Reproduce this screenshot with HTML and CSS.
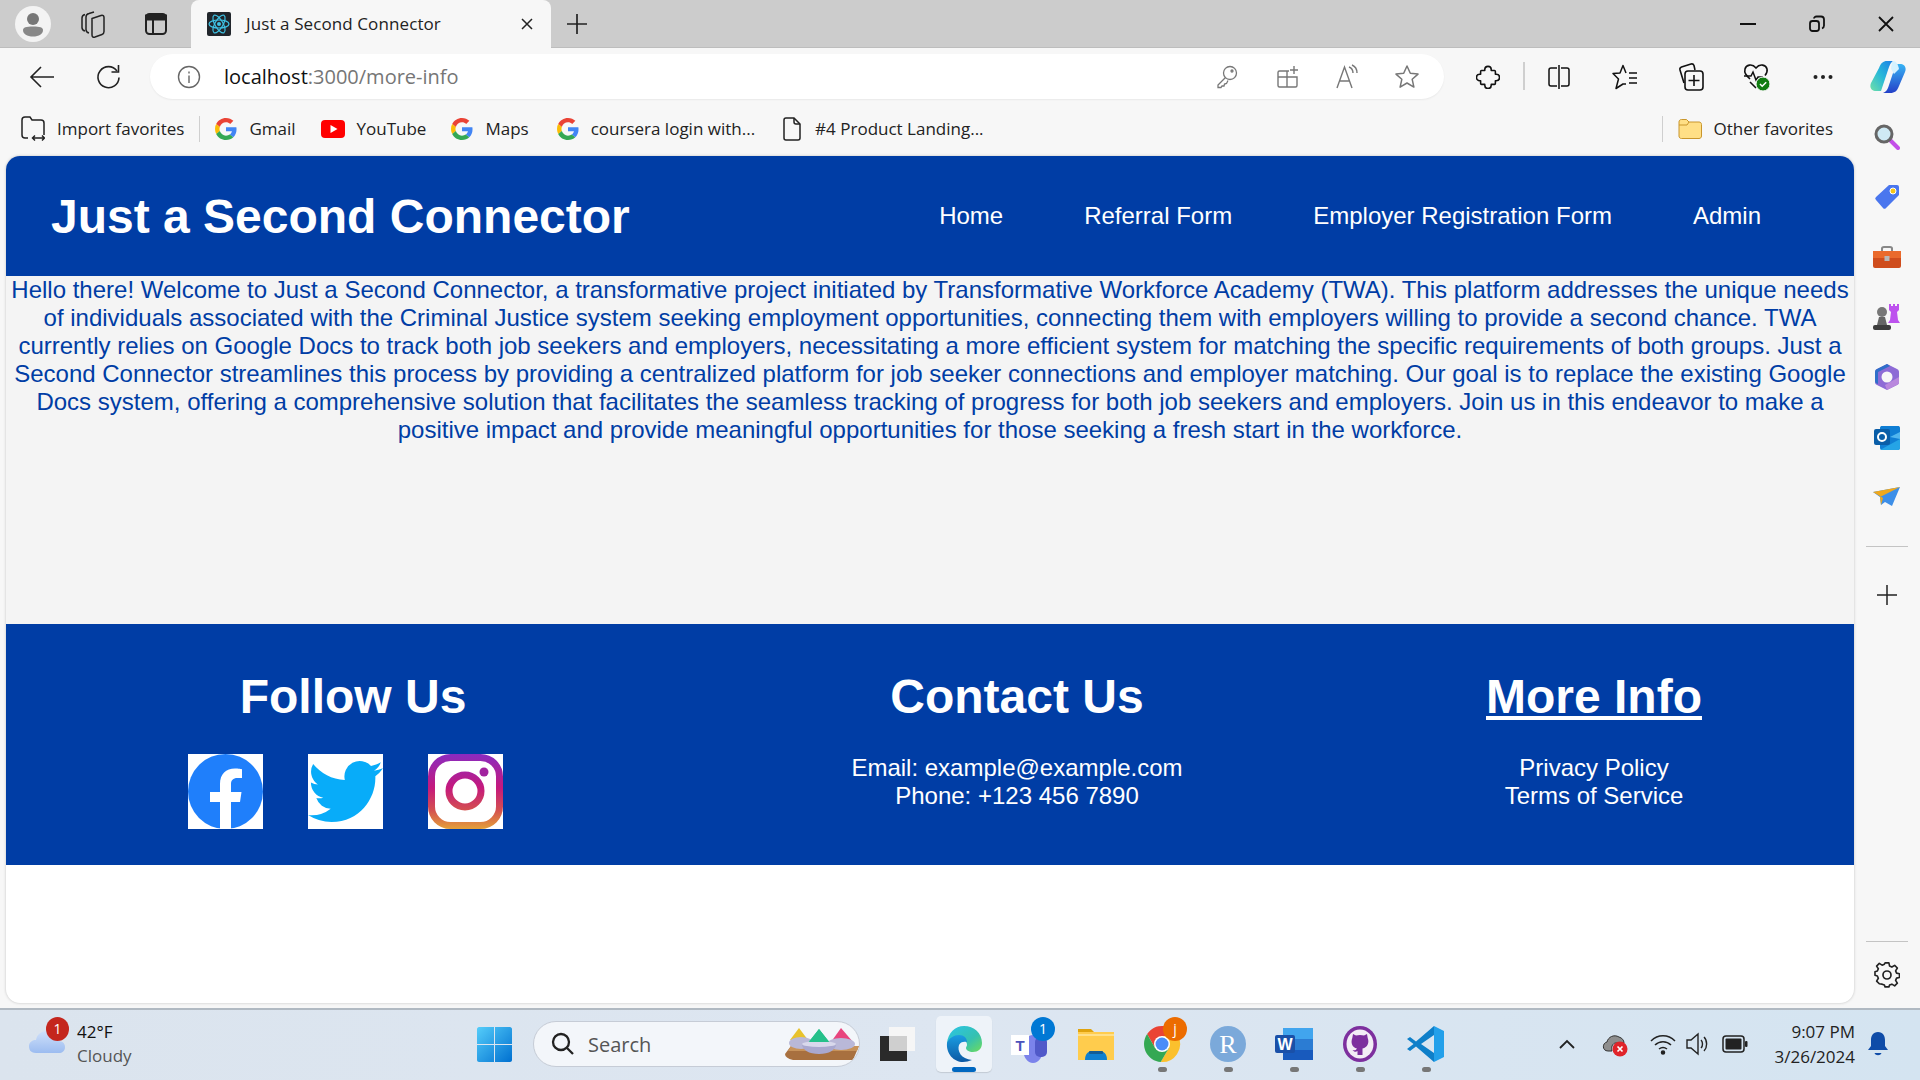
FILE: index.html
```html
<!DOCTYPE html>
<html lang="en">
<head>
<meta charset="utf-8">
<title>Just a Second Connector</title>
<link rel="stylesheet" href="styles.css">
</head>
<body>
<svg class="defs" width="0" height="0" aria-hidden="true">
  <defs>
    <symbol id="g" viewBox="0 0 48 48">
      <path fill="#EA4335" d="M24 9.5c3.54 0 6.71 1.22 9.21 3.6l6.85-6.85C35.9 2.38 30.47 0 24 0 14.62 0 6.51 5.38 2.56 13.22l7.98 6.19C12.43 13.72 17.74 9.5 24 9.5z"/>
      <path fill="#4285F4" d="M46.98 24.55c0-1.57-.15-3.09-.38-4.55H24v9.02h12.94c-.58 2.96-2.26 5.48-4.78 7.18l7.73 6c4.51-4.18 7.09-10.36 7.09-17.65z"/>
      <path fill="#FBBC05" d="M10.53 28.59c-.48-1.45-.76-2.99-.76-4.59s.27-3.14.76-4.59l-7.98-6.19C.92 16.46 0 20.12 0 24c0 3.88.92 7.54 2.56 10.78l7.97-6.19z"/>
      <path fill="#34A853" d="M24 48c6.48 0 11.93-2.13 15.89-5.81l-7.73-6c-2.15 1.45-4.92 2.3-8.16 2.3-6.26 0-11.57-4.22-13.47-9.91l-7.98 6.19C6.51 42.62 14.62 48 24 48z"/>
    </symbol>
    <linearGradient id="ig" x1="0" y1="0" x2="0" y2="75" gradientUnits="userSpaceOnUse">
      <stop offset="0" stop-color="#8a2bc0"/><stop offset=".45" stop-color="#c5197d"/><stop offset=".75" stop-color="#d4504f"/><stop offset="1" stop-color="#e4a03a"/>
    </linearGradient>
    <linearGradient id="edge1" x1="0" y1="0" x2="1" y2="1">
      <stop offset="0" stop-color="#2bc4e8"/><stop offset=".6" stop-color="#35c1b0"/><stop offset="1" stop-color="#6fdc5a"/>
    </linearGradient>
    <linearGradient id="edge2" x1="0" y1="0" x2="0" y2="1">
      <stop offset="0" stop-color="#1b9de2"/><stop offset="1" stop-color="#0c59a4"/>
    </linearGradient>
    <linearGradient id="cop1" x1="0" y1="1" x2="1" y2="0">
      <stop offset="0" stop-color="#6fe0a8"/><stop offset=".5" stop-color="#28b8d8"/><stop offset="1" stop-color="#1c7fe8"/>
    </linearGradient>
    <linearGradient id="cop2" x1="0" y1="0" x2="0" y2="1">
      <stop offset="0" stop-color="#38b4f4"/><stop offset="1" stop-color="#2440c8"/>
    </linearGradient>
    <linearGradient id="win" x1="0" y1="0" x2="1" y2="1">
      <stop offset="0" stop-color="#55cdfa"/><stop offset="1" stop-color="#0070d0"/>
    </linearGradient>
    <linearGradient id="cloud" x1="0" y1="0" x2="0" y2="1">
      <stop offset="0" stop-color="#cfe0fa"/><stop offset="1" stop-color="#9cbcf0"/>
    </linearGradient>
  </defs>
</svg>

<div class="window">
  <header class="titlebar">
    <div class="tb-btn w60 ml3">
      <svg width="36" height="36" viewBox="0 0 36 36"><circle cx="18" cy="18" r="18" fill="#f3f3f3"/><circle cx="18" cy="13" r="6" fill="#777"/><path d="M8 24c0-2.500 3-3.500 10-3.500s10 1 10 3.500c0 4-4 6.500-10 6.500S8 28 8 24z" fill="#888"/></svg>
    </div>
    <div class="tb-btn w60">
      <svg width="26" height="28" viewBox="0 0 26 28" fill="none" stroke="#222" stroke-width="1.500"><path d="M5 21c-2-.5-3-2-3-3.500V8c0-2 1-3 3-3.500"/><path d="M9 23c-2-.5-3-2-3-3.500V7c0-2 1-3 3-3.500l5-1.500"/><path d="M12 8.500l9-3c2-.6 3 .5 3 2v14c0 1.500-.5 2.500-2 3l-7 2.500c-2 .6-3-.5-3-2z"/></svg>
    </div>
    <div class="tb-btn w66">
      <svg width="24" height="24" viewBox="0 0 24 24" fill="none" stroke="#222" stroke-width="2"><rect x="2" y="2" width="20" height="20" rx="3.500"/><path d="M2 3.500h20v4H2z" fill="#222"/><path d="M9 7v15"/></svg>
    </div>
    <div class="tab">
      <svg class="tab-ico" width="24" height="24" viewBox="0 0 24 24"><rect width="24" height="24" rx="2" fill="#21262c"/><g fill="none" stroke="#3fc4e6" stroke-width="1.200"><ellipse cx="12" cy="12" rx="10" ry="4"/><ellipse cx="12" cy="12" rx="10" ry="4" transform="rotate(60 12 12)"/><ellipse cx="12" cy="12" rx="10" ry="4" transform="rotate(120 12 12)"/></g><circle cx="12" cy="12" r="2" fill="#3fc4e6"/></svg>
      <span class="tab-title">Just a Second Connector</span>
      <svg class="tab-close" width="12" height="12" viewBox="0 0 12 12" stroke="#222" stroke-width="1.500"><path d="M1 1l10 10M11 1L1 11"/></svg>
    </div>
    <div class="tb-btn w52">
      <svg width="22" height="22" viewBox="0 0 22 22" stroke="#222" stroke-width="1.700"><path d="M11 1v20M1 11h20"/></svg>
    </div>
    <div class="win-controls">
      <div class="win-btn"><svg width="16" height="16" viewBox="0 0 16 16" stroke="#111" stroke-width="2"><path d="M0 8h16"/></svg></div>
      <div class="win-btn"><svg width="16" height="18" viewBox="0 0 16 18" fill="none" stroke="#111" stroke-width="1.800"><rect x="1" y="6" width="9" height="10" rx="2.500"/><path d="M5 3.500c0-1 1-2 2.500-2H12c1.500 0 3 1 3 3v6c0 1.500-.6 2.500-2 3"/></svg></div>
      <div class="win-btn"><svg width="16" height="16" viewBox="0 0 16 16" stroke="#111" stroke-width="1.800"><path d="M1 1l14 14M15 1L1 15"/></svg></div>
    </div>
  </header>

  <div class="toolbar">
    <div class="tool">
      <svg width="26" height="24" viewBox="0 0 26 24" fill="none" stroke="#222" stroke-width="1.600"><path d="M25 12H2M12 2L2 12l10 10"/></svg>
    </div>
    <div class="tool">
      <svg width="26" height="28" viewBox="0 0 26 28" fill="none" stroke="#222" stroke-width="1.600"><path d="M22 8a10.500 10.500 0 1 0 2 6.500"/><path d="M23.500 2v7h-7"/></svg>
    </div>
    <div class="omnibox">
      <svg class="info" width="24" height="24" viewBox="0 0 24 24" fill="none" stroke="#666" stroke-width="1.400"><circle cx="12" cy="12" r="10.500"/><path d="M12 10.500V18M12 6.500V8.500"/></svg>
      <span class="url"><span class="url-host">localhost</span>:3000/more-info</span>
      <div class="omni-tools">
        <div class="omni-tool"><svg width="22" height="24" viewBox="0 0 22 24" fill="none" stroke="#777" stroke-width="1.300"><circle cx="14" cy="8" r="6.500"/><circle cx="16" cy="6" r="1"/><path d="M9.500 12.500L2 20v2.500h3l1-1.500h2l.5-2 2-.5 1.500-3"/></svg></div>
        <div class="omni-tool"><svg width="24" height="24" viewBox="-1 0 24 24" fill="none" stroke="#777" stroke-width="1.400"><path d="M13 6H3.500C2.500 6 2 6.500 2 7.500v13C2 21.500 2.500 22 3.500 22h16c1 0 1.500-.5 1.500-1.500V12H2M11 6v16"/><path d="M18 1v8M14 5h8"/></svg></div>
        <div class="omni-tool"><svg width="26" height="26" viewBox="-2 0 26 26" fill="none" stroke="#777" stroke-width="1.400"><path d="M1 24L8.500 3 16 24M3.500 17h10"/><path d="M13 3c2.500 1 4 3.500 4 6M16 1c3 1.300 5 4 5 8"/></svg></div>
        <div class="omni-tool"><svg width="26" height="26" viewBox="0 0 26 26" fill="none" stroke="#777" stroke-width="1.500"><path d="M13 2l3.300 7.300 7.700.8-5.800 5.200 1.700 7.800L13 19l-6.900 4.100 1.700-7.800L2 10.100l7.700-.8z" stroke-linejoin="round"/></svg></div>
      </div>
    </div>
    <div class="tool ml11">
      <svg width="24" height="24" viewBox="0 0 26 26" fill="none" stroke="#111" stroke-width="1.700"><path d="M9.500 6V5a3.500 3.500 0 0 1 7 0v1H20a1 1 0 0 1 1 1v3h1a3.500 3.500 0 0 1 0 7h-1v3a1 1 0 0 1-1 1h-3.500v1a3.500 3.500 0 0 1-7 0v-1H6a1 1 0 0 1-1-1v-3H4a3.500 3.500 0 0 1 0-7h1V7a1 1 0 0 1 1-1z" stroke-linejoin="round"/></svg>
    </div>
    <div class="tool-sep"></div>
    <div class="tool">
      <svg width="24" height="26" viewBox="0 0 24 26" fill="none" stroke="#111" stroke-width="1.500"><path d="M10 4H4C2.500 4 2 5 2 6v14c0 1 .5 2 2 2h6M14 4h6c1.500 0 2 1 2 2v14c0 1-.5 2-2 2h-6M12 1v24"/></svg>
    </div>
    <div class="tool">
      <svg width="26" height="26" viewBox="0 0 26 26" fill="none" stroke="#111" stroke-width="1.500"><path d="M14 9L11 1.500 8 9l-7 .5L6.500 15 4 24.500l7-4.500h3" stroke-linejoin="round"/><path d="M17 9h8M17 14h8M17 19h8"/></svg>
    </div>
    <div class="tool">
      <svg width="26" height="30" viewBox="0 0 26 30" fill="none" stroke="#111" stroke-width="1.600"><path d="M6 21L2 8c-.4-1.500.2-2.500 1.500-3L13 2c1.500-.4 2.500.2 3 1.500L17 8"/><rect x="7" y="9" width="18" height="19" rx="3" fill="#f7f7f7"/><path d="M16 13v11M10.500 18.500h11"/></svg>
    </div>
    <div class="tool">
      <svg width="28" height="30" viewBox="0 0 28 30"><path d="M7 17C3 13 1 11 2 7c1-4 7-6 11-1 4-5 10-3 11 1 .6 2.500-.3 4.500-2 6.500" fill="none" stroke="#111" stroke-width="1.600"/><path d="M1 14h7l2-4 3 8 2-3h5" fill="none" stroke="#111" stroke-width="1.500"/><path d="M7 20l6 6" stroke="#111" stroke-width="1.600"/><circle cx="20" cy="22" r="7" fill="#107c10" stroke="#f7f7f7"/><path d="M17 22l2.200 2.200 4-4" fill="none" stroke="#fff" stroke-width="1.500"/></svg>
    </div>
    <div class="tool">
      <svg width="20" height="6" viewBox="0 0 20 6" fill="#222"><circle cx="2.500" cy="3" r="2"/><circle cx="10" cy="3" r="2"/><circle cx="17.500" cy="3" r="2"/></svg>
    </div>
    <div class="tool w64">
      <svg width="36" height="32" viewBox="0 0 36 32"><path d="M23 0h-6c-4 0-6 2-8 7L1 22c-2 5 1 8 5 8h5l7-21c1.500-5 3-8 5-9z" fill="url(#cop1)"/><path d="M13 32h7c5 0 7-2 9-7l6-14c2-5-1-8-5-8h-4l-7 21c-1.500 5-3 7-6 8z" fill="url(#cop2)"/><path d="M23 0c3 0 5 3 6 8l-5 5-3-5c.3-4 1-7 2-8z" fill="#d5f2ff"/></svg>
    </div>
  </div>

  <div class="workspace">
    <div class="viewport">
      <nav class="bookmarks">
        <div class="bm bm-import">
          <svg width="24" height="26" viewBox="0 0 24 26" fill="none" stroke="#222" stroke-width="1.500"><path d="M7 22H4c-1.500 0-3-1-3-3V4c0-1.500 1-3 3-3h5l2 3h9c1.500 0 3 1 3 3v12"/><path d="M12 22h11M14 19.500L11.500 22l2.500 2.500M21 19.500l2.500 2.500-2.500 2.500"/></svg>
          <span>Import favorites</span>
        </div>
        <div class="bm-sep"></div>
        <div class="bm"><svg width="22" height="22"><use href="#g"/></svg><span>Gmail</span></div>
        <div class="bm"><svg width="24" height="18" viewBox="0 0 24 18"><rect width="24" height="18" rx="4" fill="#f00"/><path d="M9.500 5v8l7-4z" fill="#fff"/></svg><span>YouTube</span></div>
        <div class="bm"><svg width="22" height="22"><use href="#g"/></svg><span>Maps</span></div>
        <div class="bm bm-shift"><svg width="22" height="22"><use href="#g"/></svg><span>coursera login with...</span></div>
        <div class="bm bm-shift bm-doc"><svg width="18" height="24" viewBox="0 0 18 24" fill="none" stroke="#222" stroke-width="1.500"><path d="M3 1h8l6 6v14c0 1.500-1 2-2 2H3c-1 0-2-.5-2-2V3c0-1.500 1-2 2-2z"/><path d="M11 1v4c0 1.500.5 2 2 2h4"/></svg><span>#4 Product Landing...</span></div>
        <div class="bm-sep bm-sep-right"></div>
        <div class="bm"><svg width="24" height="20" viewBox="0 0 24 20"><path d="M1 3c0-1.500 1-2.500 2.500-2.500h5L11 3h10c1.500 0 2.500 1 2.500 2.500V17c0 1.500-1 2.500-2.500 2.500H3.500C2 19.500 1 18.500 1 17z" fill="#ffdf86" stroke="#c9962c"/><path d="M1 6h8l2-3" fill="none" stroke="#c9962c"/></svg><span>Other favorites</span></div>
      </nav>

      <main class="page">
        <header class="site-header">
          <h1 class="site-title">Just a Second Connector</h1>
          <ul class="site-nav">
            <li>Home</li>
            <li>Referral Form</li>
            <li>Employer Registration Form</li>
            <li>Admin</li>
          </ul>
        </header>
        <section class="site-content">
          <p>Hello there! Welcome to Just a Second Connector, a transformative project initiated by Transformative Workforce Academy (TWA). This platform addresses the unique needs of individuals associated with the Criminal Justice system seeking employment opportunities, connecting them with employers willing to provide a second chance. TWA currently relies on Google Docs to track both job seekers and employers, necessitating a more efficient system for matching the specific requirements of both groups. Just a Second Connector streamlines this process by providing a centralized platform for job seeker connections and employer matching. Our goal is to replace the existing Google Docs system, offering a comprehensive solution that facilitates the seamless tracking of progress for both job seekers and employers. Join us in this endeavor to make a positive impact and provide meaningful opportunities for those seeking a fresh start in the workforce.</p>
        </section>
        <footer class="site-footer">
          <div class="foot-col">
            <h2>Follow Us</h2>
            <div class="socials">
              <svg width="75" height="75" viewBox="0 0 75 75"><rect width="75" height="75" fill="#fff"/><circle cx="37.500" cy="37.500" r="37.500" fill="#1f7ffb"/><path d="M32 75V48H22V38H32V30C32 20 38 14.500 47 14.500C50 14.500 54 15.200 54 15.200V24H49.500C45 24 43 26.500 43 30V38H53.500L52 48H43V75Z" fill="#fff"/></svg>
              <svg width="75" height="75" viewBox="0 0 75 75"><rect width="75" height="75" fill="#fff"/><path transform="scale(3.125)" fill="#08acf9" d="M23.953 4.570a10 10 0 01-2.825.775 4.958 4.958 0 002.163-2.723c-.951.555-2.005.959-3.127 1.184a4.920 4.920 0 00-8.384 4.482C7.690 8.095 4.067 6.130 1.640 3.162a4.822 4.822 0 00-.666 2.475c0 1.710.870 3.213 2.188 4.096a4.904 4.904 0 01-2.228-.616v.060a4.923 4.923 0 003.946 4.827 4.996 4.996 0 01-2.212.085 4.936 4.936 0 004.604 3.417 9.867 9.867 0 01-6.102 2.105c-.390 0-.779-.023-1.170-.067a13.995 13.995 0 007.557 2.209c9.053 0 13.998-7.496 13.998-13.985 0-.210 0-.420-.015-.630A9.935 9.935 0 0024 4.590z"/></svg>
              <svg width="75" height="75" viewBox="0 0 75 75"><rect width="75" height="75" fill="#fff"/><rect x="3.500" y="3.500" width="68" height="68" rx="19" fill="none" stroke="url(#ig)" stroke-width="7"/><circle cx="37" cy="37" r="16" fill="none" stroke="url(#ig)" stroke-width="7"/><circle cx="56" cy="18" r="4.500" fill="#a1239f"/></svg>
            </div>
          </div>
          <div class="foot-col">
            <h2>Contact Us</h2>
            <p>Email: example@example.com</p>
            <p>Phone: +123 456 7890</p>
          </div>
          <div class="foot-col">
            <h2 class="underlined">More Info</h2>
            <p>Privacy Policy</p>
            <p>Terms of Service</p>
          </div>
        </footer>
      </main>
    </div>

    <aside class="sidebar">
      <div class="side-item"><svg width="26" height="26" viewBox="0 0 26 26"><path d="M16 16l8 8" stroke="#c34ee8" stroke-width="4" stroke-linecap="round"/><circle cx="10" cy="10" r="8" fill="#cfeaf5" stroke="#666" stroke-width="3"/></svg></div>
      <div class="side-item"><svg width="26" height="26" viewBox="0 0 26 26"><path d="M15 1H23a2 2 0 0 1 2 2V11L12 24a2 2 0 0 1-3 0L2 16a2 2 0 0 1 0-3Z" fill="#4a76ee"/><circle cx="19" cy="7" r="3" fill="#f5c518" stroke="#fff"/></svg></div>
      <div class="side-item"><svg width="28" height="22" viewBox="0 0 28 22"><path d="M9 5V2.500c0-1 1-1.500 2-1.500h6c1 0 2 .5 2 1.500V5" fill="none" stroke="#888" stroke-width="2"/><rect y="5" width="28" height="17" rx="2" fill="#cf4d1d"/><rect y="5" width="28" height="7" fill="#ea6a2c"/><rect x="11.500" y="10" width="5" height="5" fill="#b8b8b8"/></svg></div>
      <div class="side-item"><svg width="28" height="28" viewBox="0 0 28 28"><path d="M16 1h2v2h2V1h2v2h2V1h2v6l-2 2 1 8 2 3H15l2-3 1-8-2-2z" fill="#bd52ee"/><circle cx="9" cy="9" r="5" fill="#777"/><path d="M6 14h6l2 8H4z" fill="#666"/><rect x="0" y="22" width="18" height="5" rx="2" fill="#3d3d3d"/></svg></div>
      <div class="side-item"><svg width="26" height="28" viewBox="0 0 26 28"><path d="M13 1l10 5c2 1 2 2 2 4v8c0 2 0 3-2 4l-10 5-10-5c-2-1-2-2-2-4v-8c0-2 0-3 2-4z" fill="#8d6bd6"/><path d="M1 18V10c0-2 0-3 2-4l10-5 3 2-12 6v12c-2-.5-3-1.500-3-3z" fill="#2f6fc9"/><path d="M13 27l10-5c2-1 2-2 2-4v-4l-14 8z" fill="#b988dd"/><circle cx="13" cy="14" r="5.500" fill="#f7f7f7"/></svg></div>
      <div class="side-item"><svg width="26" height="26" viewBox="0 0 26 26"><path d="M8 2h16c1 0 2 .5 2 2v20c0 1-1 2-2 2H8c-1 0-2-1-2-2V4c0-1.500 1-2 2-2z" fill="#0f7ed4"/><path d="M16 13l10-5v7z" fill="#50b6ef"/><path d="M6 26l20-11v9c0 1-1 2-2 2z" fill="#25a4e6"/><rect y="5" width="16" height="16" rx="2" fill="#0a5ea8"/><circle cx="8" cy="13" r="4" fill="none" stroke="#fff" stroke-width="2"/></svg></div>
      <div class="side-item"><svg width="28" height="20" viewBox="0 0 28 20"><path d="M0 5l27-5-8 19-7-4-4 3-1-8z" fill="#3d8fe8"/><path d="M0 5l27-5L7 10l1 8 2-7z" fill="#f0a81c"/></svg></div>
      <div class="side-divider"></div>
      <div class="side-item short"><svg width="20" height="20" viewBox="0 0 20 20" stroke="#222" stroke-width="1.500"><path d="M10 0v20M0 10h20"/></svg></div>
      <div class="side-spacer"></div>
      <div class="side-divider tight"></div>
      <div class="side-item gear"><svg width="26" height="26" viewBox="0 0 26 26" fill="none" stroke="#222" stroke-width="1.700"><path d="M11 1.500h4l.7 3.300 2.400 1 2.900-1.800 2.800 2.800-1.800 2.900 1 2.400 3 .7v3.800l-3 .7-1 2.400 1.800 2.900-2.800 2.800-2.900-1.800-2.400 1-.7 1.800h-4l-.7-1.800-2.400-1L5 23.200l-2.800-2.800L4 17.500l-1-2.400-2.500-.7v-3.800l2.500-.7 1-2.400L2.200 4.800 5 2l2.900 1.800 2.400-1z" transform="translate(.5 -.5) scale(.96)" stroke-linejoin="round"/><circle cx="13" cy="13" r="4"/></svg></div>
    </aside>
  </div>

  <footer class="taskbar">
    <div class="weather">
      <svg class="weather-ico" width="36" height="24" viewBox="0 0 36 24"><path d="M7 24C1 24 0 20 0 17 0 13 4 10.500 7 11 8 5 13 2 18 2 24 2 29 6 29 12 33 12 36 14 36 18 36 22 33 24 30 24Z" fill="url(#cloud)"/></svg>
      <span class="weather-badge">1</span>
      <div class="weather-text"><span class="temp">42°F</span><span class="cond">Cloudy</span></div>
    </div>
    <svg class="start" width="35" height="35" viewBox="0 0 35 35"><path d="M0 2c0-1 1-2 2-2h15v17H0zM18 0h15c1 0 2 1 2 2v15H18zM0 18h17v17H2c-1 0-2-1-2-2zM18 18h17v15c0 1-1 2-2 2H18z" fill="url(#win)"/></svg>
    <div class="search">
      <svg width="24" height="24" viewBox="0 0 24 24" fill="none" stroke="#222" stroke-width="2.300"><circle cx="10" cy="10" r="8"/><path d="M16 16l6 6"/></svg>
      <span>Search</span>
      <svg class="bowls" width="74" height="32" viewBox="0 0 74 32"><path d="M6 18H74L68 32H8Q0 30 0 26Z" fill="#a8703f"/><path d="M6 18H74L72 23H3Z" fill="#c8935a"/><path d="M14 0L5 12H23Z" fill="#e8c22c"/><ellipse cx="16" cy="15" rx="12" ry="6" fill="#b9b8d8"/><path d="M56 0L46 14H68Z" fill="#e8457e"/><ellipse cx="56" cy="16" rx="14" ry="6" fill="#b9b8d8"/><path d="M34 1L22 16H46Z" fill="#25c08a"/><path d="M17 16H51C51 22 44 26 34 26S17 22 17 16Z" fill="#a9a8cf"/><ellipse cx="34" cy="16" rx="17" ry="3" fill="#d8d8ec"/><path d="M34 1L24 14H44Z" fill="#25c08a"/></svg>
    </div>
    <div class="tk tk-view"><svg width="35" height="34" viewBox="0 0 35 34"><rect y="9" width="27" height="25" fill="#2a2a2a"/><rect x="9" width="26" height="24" fill="#f6f6f6"/><rect x="9" y="9" width="18" height="15" fill="#cfcfcf"/></svg></div>
    <div class="tk tk-active"><svg width="36" height="36" viewBox="0 0 36 36"><path d="M1 17C2 7 9 0 18 0c10 0 18 7 18 17 0 6-4 9-9 9-4 0-7-2-7-4 0-1 1-2 1-3 0-4-3-6-8-6-5 0-10 3-12 7z" fill="url(#edge1)"/><path d="M1 17c2-5 7-8 12-8 5 0 8 3 8 7-3-1-7 0-8 3-2 6 2 14 13 15-3 1-6 2-9 2C8 36 0 28 1 17z" fill="url(#edge2)"/></svg></div>
    <div class="tk tk-first">
      <svg width="38" height="38" viewBox="0 0 38 38"><ellipse cx="22" cy="24" rx="10" ry="14" fill="#7b83eb"/><rect x="24" y="12" width="12" height="20" rx="5" fill="#5059c9"/><rect x="0" y="10" width="18" height="20" fill="#fff"/><text class="teams-t" x="9" y="26" text-anchor="middle">T</text></svg>
      <span class="tk-badge blue">1</span>
    </div>
    <div class="tk"><svg width="36" height="36" viewBox="0 0 36 36"><path d="M0 3h13l3 3h-16z" fill="#e0a30e"/><rect y="6" width="36" height="28" fill="#ffcc4d"/><rect y="8" width="36" height="2" fill="#ffe08a"/><path d="M7 34c0-6 3-9 8-9h6c5 0 8 3 8 9z" fill="#0f80d0"/><rect x="11" y="25" width="14" height="3" rx="1" fill="#135d95"/></svg></div>
    <div class="tk run">
      <svg width="38" height="38" viewBox="0 0 38 38"><path d="M35.200 11.100A18 18 0 0 0 4.100 9L12.100 23 19 11Z" fill="#ea4335"/><path d="M35.200 11.100A18 18 0 0 1 17.700 37L25.900 23 19 11Z" fill="#fbc02d"/><path d="M17.700 37A18 18 0 0 1 4.100 9L12.100 23H25.900Z" fill="#34a853"/><circle cx="19" cy="19" r="8" fill="#fff"/><circle cx="19" cy="19" r="6.500" fill="#4b8df8"/></svg>
      <span class="tk-badge orange">j</span>
    </div>
    <div class="tk run"><svg width="36" height="36" viewBox="0 0 36 36"><circle cx="18" cy="18" r="18" fill="#7ba9da"/><text class="r-letter" x="18" y="27" text-anchor="middle">R</text></svg></div>
    <div class="tk run"><svg width="38" height="32" viewBox="0 0 38 32"><rect x="8" width="30" height="11" fill="#41a5ee"/><rect x="8" y="11" width="30" height="11" fill="#2b7cd3"/><rect x="8" y="22" width="30" height="10" fill="#185abd"/><rect y="7" width="20" height="18" rx="2" fill="#1a50a8"/><text class="word-w" x="10" y="22" text-anchor="middle">W</text></svg></div>
    <div class="tk run"><svg width="34" height="36" viewBox="0 0 34 36"><ellipse cx="17" cy="18" rx="17" ry="18" fill="#7d2f9e"/><ellipse cx="17" cy="18" rx="13.500" ry="14.500" fill="#f3edf6"/><path d="M10 8l3 1.500c2.500-.7 5.500-.7 8 0L24 8l.7 4c1.800 4.500 0 9.500-5.200 10.500V29h-5v-4c-1.500 1.200-3.500 1-5-1 1.800.8 3.500.3 4.500-1.500C9 21.500 7.500 16.500 9.300 12z" fill="#7d2f9e"/></svg></div>
    <div class="tk run"><svg width="38" height="36" viewBox="0 0 38 36"><path d="M27 0V9L14 18 27 27V36L9 20.500 3 25 0 23 6.500 18 0 13 3 11 9 15.500Z" fill="#0e7fc9"/><path d="M27 0L37 5V31L27 36Z" fill="#23a0ea"/></svg></div>
    <div class="tray tray-chev"><svg width="16" height="10" viewBox="0 0 16 10" fill="none" stroke="#222" stroke-width="1.800"><path d="M1 9l7-7 7 7"/></svg></div>
    <div class="tray tray-cloud"><svg width="26" height="26" viewBox="0 0 26 26"><path d="M6 20c-6 0-6-8-1-9 1-5 7-8 12-5 3 1 5 3 5 6H14c-4 0-5 5-4 8z" fill="#8e8e8e" stroke="#333"/><circle cx="18" cy="18" r="7.500" fill="#e0242a"/><path d="M15.500 15.500l5 5M20.500 15.500l-5 5" stroke="#fff" stroke-width="1.700"/></svg></div>
    <div class="tray tray-wifi"><svg width="26" height="22" viewBox="0 0 26 22" fill="none" stroke="#222" stroke-width="1.500"><path d="M1 8c7-7 17-7 24 0M5 12c4.500-4.500 11.500-4.500 16 0M9 16c2.500-2 5.500-2 8 0"/><circle cx="13" cy="19.500" r="1.500" fill="#222"/></svg></div>
    <div class="tray tray-vol"><svg width="24" height="24" viewBox="0 0 24 24" fill="none" stroke="#222" stroke-width="1.400"><path d="M1 8h4l7-6v20l-7-6H1z"/><path d="M15 8c2 2 2 6 0 8M18 5c3.500 3.500 3.500 10.500 0 14"/></svg></div>
    <div class="tray tray-bat"><svg width="26" height="18" viewBox="0 0 26 18"><rect x="1" y="1" width="21" height="16" rx="3" fill="none" stroke="#222" stroke-width="1.500"/><rect x="3.500" y="3.500" width="16" height="11" rx="1" fill="#222"/><rect x="23" y="6" width="2.500" height="6" rx="1" fill="#222"/></svg></div>
    <div class="clock"><span>9:07 PM</span><span>3/26/2024</span></div>
    <div class="tray tray-bell"><svg width="22" height="26" viewBox="0 0 22 26"><path d="M11 1c5 0 7 4 7 8v6l3 4H1l3-4V9c0-4 2-8 7-8z" fill="#0f4ca8"/><path d="M7.500 22h7c-1 3-6 3-7 0z" fill="#0f4ca8"/></svg></div>
  </footer>
</div>
</body>
</html>
```
FILE: styles.css
```css
* { box-sizing: border-box; }
html, body { margin: 0; padding: 0; }
body { width: 1920px; height: 1080px; overflow: hidden; font-family: "Open Sans", "Noto Sans", sans-serif; color: #111; background: #f7f7f7; }
.defs { position: absolute; }
svg { display: block; flex: none; }

.window { display: flex; flex-direction: column; width: 1920px; height: 1080px; }

/* title bar */
.titlebar { display: flex; align-items: center; height: 48px; background: #cccccc; border-bottom: 1px solid #bdbdbd; flex: none; }
.tb-btn { display: flex; align-items: center; justify-content: center; height: 47px; }
.w60 { width: 60px; }
.w66 { width: 66px; }
.w52 { width: 52px; }
.w64 { width: 64px; }
.ml3 { margin-left: 3px; }
.ml11 { margin-left: 11px; }
.tab { display: flex; align-items: center; width: 360px; height: 48px; margin-left: 2px; padding-left: 16px; background: #f7f7f7; border-radius: 8px 8px 0 0; }
.tab-title { margin-left: 15px; font-size: 17px; letter-spacing: .1px; color: #222; white-space: nowrap; }
.tab-close { margin-left: auto; margin-right: 18px; }
.win-controls { display: flex; margin-left: auto; }
.win-btn { display: flex; align-items: center; justify-content: center; width: 69px; height: 47px; }

/* toolbar */
.toolbar { display: flex; align-items: flex-start; height: 59px; padding: 6px 0 0 9px; flex: none; background: #f7f7f7; }
.tool { display: flex; align-items: center; justify-content: center; width: 66px; height: 45px; flex: none; }
.tool.w64 { width: 64px; }
.tool-sep { width: 2px; height: 28px; margin: 8px 1px 0 2px; background: #cfcfcf; }
.omnibox { display: flex; align-items: center; width: 1295px; height: 45px; margin-left: 9px; padding-left: 27px; padding-right: 7px; background: #fff; border-radius: 23px; box-shadow: 0 1px 2px rgba(0,0,0,.06); }
.url { margin-left: 23px; font-size: 20px; color: #767676; white-space: nowrap; }
.url-host { color: #111; }
.omni-tools { display: flex; margin-left: auto; }
.omni-tool { display: flex; align-items: center; justify-content: center; width: 60px; height: 45px; }

/* workspace */
.workspace { display: flex; flex: 1; min-height: 0; }
.viewport { display: flex; flex-direction: column; width: 1854px; flex: none; padding-bottom: 5px; }
.bookmarks { display: flex; align-items: center; height: 49px; padding: 0 21px 6px 21px; font-size: 17px; color: #222; flex: none; }
.bm { display: flex; align-items: center; gap: 12px; margin-right: 25px; white-space: nowrap; }
.bm-import { margin-right: 0; }
.bm-shift { margin-left: 3px; }
.bm-doc { gap: 14px; }
.bm-sep { width: 1px; height: 26px; margin: 0 15px; background: #cfcfcf; flex: none; }
.bm-sep-right { margin-left: auto; }
.bm:last-child { margin-right: 0; }

.page { display: flex; flex-direction: column; flex: 1; width: 1848px; margin-left: 6px; background: #fff; border-radius: 14px; overflow: hidden; box-shadow: 0 0 3px rgba(0,0,0,.22); font-family: "Liberation Sans", Arial, sans-serif; }
.site-header { display: flex; align-items: center; height: 120px; padding-left: 45px; background: #003da5; color: #fff; flex: none; }
.site-title { margin: 0; font-size: 48px; font-weight: 700; white-space: nowrap; }
.site-nav { display: flex; gap: 81px; list-style: none; margin: 0 93px 0 auto; padding: 0; font-size: 24px; }
.site-content { height: 348px; background: #f4f4f4; color: #003da5; font-size: 24px; text-align: center; flex: none; }
.site-content p { margin: 0; }
.site-footer { display: grid; grid-template-columns: 694px 634px 520px; padding: 45px 0 36px; background: #003da5; color: #fff; text-align: center; font-size: 24px; flex: none; }
.foot-col { display: flex; flex-direction: column; align-items: center; }
.foot-col h2 { margin: 0 0 30px; font-size: 48px; font-weight: 700; }
.foot-col h2.underlined { text-decoration: underline; }
.foot-col p { margin: 0; }
.socials { display: flex; gap: 45px; padding-right: 15px; }

/* side bar */
.sidebar { display: flex; flex-direction: column; align-items: center; flex: 1; }
.side-item { display: flex; align-items: center; justify-content: center; width: 60px; height: 60px; flex: none; }
.side-item.short { height: 58px; margin-top: 19px; }
.side-item.gear { height: 66px; }
.side-divider { width: 42px; height: 1px; margin-top: 19px; background: #c4c4c4; flex: none; }
.side-divider.tight { margin-top: 0; }
.side-spacer { flex: 1; }

/* task bar */
.taskbar { display: flex; align-items: center; height: 72px; padding-bottom: 2px; background: linear-gradient(90deg, #dbe4ee, #dde6f1 50%, #d4e4f1); border-top: 2px solid #b0b9c2; flex: none; }
.weather { position: relative; display: flex; align-items: center; width: 477px; padding-left: 29px; }
.weather-ico { margin-top: -6px; }
.weather-badge { position: absolute; left: 46px; top: -3px; width: 23px; height: 24px; border-radius: 50%; background: #c4261d; color: #fff; font-size: 14px; line-height: 24px; text-align: center; }
.weather-text { display: flex; flex-direction: column; margin-left: 12px; font-size: 17px; line-height: 24px; }
.temp { color: #111; }
.cond { color: #555; }
.start { margin-top: 1px; }
.search { display: flex; align-items: center; width: 327px; height: 46px; margin-left: 21px; padding-left: 17px; border-radius: 23px; background: #f3f6fa; border: 1px solid #c6ccd6; font-size: 20px; color: #555; overflow: hidden; }
.search span { margin-left: 13px; }
.bowls { margin-left: auto; }
.tk { position: relative; display: flex; align-items: center; justify-content: center; width: 66px; height: 56px; flex: none; }
.tk-view { width: 72px; margin-left: 1px; }
.tk-active { width: 56px; margin-left: 3px; margin-right: 5px; background: #eef3f9; border-radius: 5px; box-shadow: 0 1px 1px rgba(0,0,0,.12); }
.tk-active::after { content: ""; position: absolute; left: 16px; bottom: 0; width: 24px; height: 5px; border-radius: 3px; background: #0067c0; }
.run::after { content: ""; position: absolute; left: 29px; bottom: 0; width: 9px; height: 5px; border-radius: 3px; background: #777; }
.tk-badge { position: absolute; top: 1px; right: 8px; width: 24px; height: 24px; border-radius: 50%; color: #fff; font-size: 14px; line-height: 24px; text-align: center; }
.blue { background: #0078d4; }
.orange { background: #ec6c00; }
.teams-t { font: 700 15px "Liberation Sans", sans-serif; fill: #4b53bc; }
.r-letter { font: 400 26px "Liberation Serif", serif; fill: #fff; }
.word-w { font: 700 16px "Liberation Sans", sans-serif; fill: #fff; }
.tray { display: flex; align-items: center; justify-content: center; height: 40px; flex: none; }
.tray-chev { width: 40px; margin-left: 88px; }
.tray-cloud { width: 56px; }
.tray-wifi { width: 40px; }
.tray-vol { width: 30px; }
.tray-bat { width: 44px; }
.clock { display: flex; flex-direction: column; align-items: flex-end; width: 98px; font-size: 17px; line-height: 25px; color: #222; }
.tray-bell { width: 46px; }
```
